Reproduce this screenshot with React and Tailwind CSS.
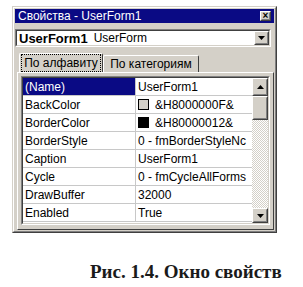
import React from 'react'

// Окно свойств VBA (Windows 2000), подпись под рисунком

const ROWS = [
  { name: '(Name)', value: 'UserForm1', selected: true },
  { name: 'BackColor', value: '&H8000000F&', swatch: 'bg-[#d4d0c8]' },
  { name: 'BorderColor', value: '&H80000012&', swatch: 'bg-black' },
  { name: 'BorderStyle', value: '0 - fmBorderStyleNc' },
  { name: 'Caption', value: 'UserForm1' },
  { name: 'Cycle', value: '0 - fmCycleAllForms' },
  { name: 'DrawBuffer', value: '32000' },
  { name: 'Enabled', value: 'True' },
]

function Raised({ className = '', children }) {
  // кнопка с выпуклой рамкой
  return (
    <div className={`border border-t-white border-l-white border-r-[#404040] border-b-[#404040] bg-[#d4d0c8] ${className}`}>
      <div className="w-full h-full border border-transparent border-r-[#808080] border-b-[#808080] flex items-center justify-center">
        {children}
      </div>
    </div>
  )
}

function ArrowDown() {
  return (
    <svg width="7" height="4" viewBox="0 0 7 4"><path d="M0 0h7L3.5 4z" fill="#000" /></svg>
  )
}

function ArrowUp() {
  return (
    <svg width="7" height="4" viewBox="0 0 7 4"><path d="M0 4h7L3.5 0z" fill="#000" /></svg>
  )
}

function Row({ row }) {
  return (
    <div className="flex h-[18px] border-b border-[#c8c8c8]">
      <div className={`w-[113px] shrink-0 pl-[2px] flex items-center border-r border-[#c8c8c8] ${row.selected ? 'bg-[#0a0a84] text-white' : 'text-black'}`}>
        {row.name}
      </div>
      <div className="flex-1 min-w-0 flex items-center pl-[2px] overflow-hidden whitespace-nowrap text-black">
        {row.swatch && (
          <span className={`w-[11px] h-[11px] border border-black shrink-0 mr-[6px] ${row.swatch}`} />
        )}
        {row.value}
      </div>
    </div>
  )
}

export default function App() {
  return (
    <div className="w-[303px] h-[287px] bg-white font-['Liberation_Sans',Arial,sans-serif] text-[12px] leading-none">
      <div className="pt-[6px] pl-[12px]">
        {/* окно */}
        <div className="w-[265px] h-[227px] border border-t-[#d4d0c8] border-l-[#d4d0c8] border-r-[#404040] border-b-[#404040] bg-[#d4d0c8]">
          <div className="h-full border border-t-white border-l-white border-r-[#808080] border-b-[#808080] p-[1px] flex flex-col">
            {/* заголовок */}
            <div className="h-[14px] bg-[#0a0a84] flex items-center pl-[3px] pr-[3px] text-white text-[12px]">
              <span>Свойства - UserForm1</span>
              <Raised className="ml-auto w-[11px] h-[10px]">
                <span className="text-[10px] font-bold text-black leading-none">×</span>
              </Raised>
            </div>

            {/* комбобокс */}
            <div className="mt-[6px] mr-[3px] h-[18px] border border-t-[#808080] border-l-[#808080] border-r-white border-b-white">
              <div className="h-full border border-t-[#404040] border-l-[#404040] border-r-[#d4d0c8] border-b-[#d4d0c8] bg-white flex items-center pl-[2px]">
                <span className="font-bold text-[13px]">UserForm1</span>
                <span className="ml-[6px]">UserForm</span>
                <Raised className="ml-auto w-[15px] h-[14px]">
                  <ArrowDown />
                </Raised>
              </div>
            </div>

            {/* вкладки */}
            <div className="mt-[6px] ml-[4px] flex items-end h-[19px]">
              <div className="h-[19px] w-[84px] border border-b-0 border-t-white border-l-white border-r-[#404040] rounded-t-[2px] flex items-center justify-center relative z-10 bg-[#d4d0c8]">
                <span className="px-[2px] py-[2px] outline outline-1 outline-dotted outline-black">По алфавиту</span>
              </div>
              <div className="h-[17px] w-[96px] border border-b-0 border-t-white border-l-white border-r-[#404040] rounded-t-[2px] flex items-center justify-center">
                По категориям
              </div>
            </div>

            {/* панель вкладки */}
            <div className="ml-[2px] flex-1 border border-t-white border-l-white border-r-[#404040] border-b-[#404040] p-[3px] pb-[4px]">
              <div className="h-full border border-t-[#808080] border-l-[#808080] border-r-white border-b-white">
                <div className="h-full border border-t-[#404040] border-l-[#404040] border-r-[#d4d0c8] border-b-[#d4d0c8] bg-white flex">
                  <div className="flex-1 min-w-0 flex flex-col">
                    {ROWS.map((r) => <Row key={r.name} row={r} />)}
                  </div>
                  {/* полоса прокрутки */}
                  <div className="w-[16px] shrink-0 flex flex-col">
                    <Raised className="h-[18px] w-[16px]"><ArrowUp /></Raised>
                    <Raised className="h-[24px] w-[16px]" />
                    <div className="flex-1 bg-[repeating-conic-gradient(#ffffff_0_25%,#d4d0c8_0_50%)] bg-[length:2px_2px]" />
                    <Raised className="h-[15px] w-[16px]"><ArrowDown /></Raised>
                  </div>
                </div>
              </div>
            </div>
          </div>
        </div>
      </div>

      {/* подпись */}
      <div className="mt-[29px] pl-[90px] font-['Liberation_Serif','Times_New_Roman',serif] font-bold text-[19px] text-[#1a1a1a] whitespace-nowrap">
        Рис. 1.4. Окно свойств
      </div>
    </div>
  )
}
